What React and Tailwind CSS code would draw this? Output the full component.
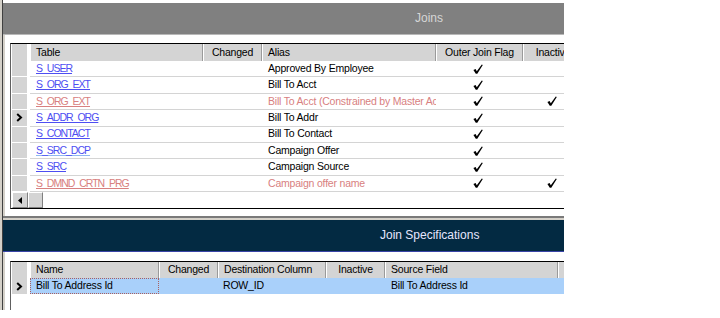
import React from "react";

const BLUE = "text-[#4e4ef2]";
const PINK = "text-[#d88080]";

function Check() {
  return (
    <svg width="10" height="10" viewBox="0 0 10 10">
      <path d="M0.4 6 L2.6 4.9 L3.8 7.2 L8.8 0.4 L9.8 0.9 L4.3 9.7 L2.8 9.7 Z" fill="#000" />
    </svg>
  );
}

function Chevron() {
  return (
    <svg width="7" height="9" viewBox="0 0 7 9">
      <path d="M1.2 1 L5 4.5 L1.2 8" stroke="#000" strokeWidth="2" fill="none" />
    </svg>
  );
}

const rows = [
  { t: "S_USER", tc: BLUE, a: "Approved By Employee", ac: "text-black", oj: true, ia: false },
  { t: "S_ORG_EXT", tc: BLUE, a: "Bill To Acct", ac: "text-black", oj: true, ia: false },
  { t: "S_ORG_EXT", tc: PINK, a: "Bill To Acct (Constrained by Master Account)", ac: PINK, oj: true, ia: true },
  { t: "S_ADDR_ORG", tc: BLUE, a: "Bill To Addr", ac: "text-black", oj: true, ia: false, sel: true },
  { t: "S_CONTACT", tc: BLUE, a: "Bill To Contact", ac: "text-black", oj: true, ia: false },
  { t: "S_SRC_DCP", tc: BLUE, a: "Campaign Offer", ac: "text-black", oj: true, ia: false, lite: true },
  { t: "S_SRC", tc: BLUE, a: "Campaign Source", ac: "text-black", oj: true, ia: false },
  { t: "S_DMND_CRTN_PRG", tc: PINK, a: "Campaign offer name", ac: PINK, oj: true, ia: true },
];

function HCell({ w, children, center }) {
  return (
    <div
      className={`${w} shrink-0 h-full bg-[#d4d4d4] border-l border-l-white border-r border-r-[#9a9a9a] flex items-center whitespace-nowrap overflow-hidden ${
        center ? "justify-center" : "pl-[5px]"
      }`}
    >
      {children}
    </div>
  );
}

function SelCell({ children, white }) {
  return (
    <div className="w-[19px] shrink-0 h-full pl-[1px] pr-[3px]">
      <div
        className={`w-full h-full bg-[#d4d4d4] flex items-center justify-center ${
          white ? "border-b border-b-white" : ""
        }`}
      >
        {children}
      </div>
    </div>
  );
}

export default function App() {
  return (
    <div
      className="w-[720px] h-[318px] bg-white overflow-hidden text-[10.5px] tracking-[-0.2px] text-black"
      style={{ fontFamily: '"Liberation Sans", Arial, sans-serif' }}
    >
      <div className="flex h-[310px] w-[564px]">
        <div className="w-[2px] shrink-0 bg-[#d4d0c8]" />
        <div className="w-[562px] shrink-0 border-l border-l-[#404040] flex flex-col overflow-hidden">
          <div className="h-[3px] shrink-0 bg-white" />
          {/* Joins header */}
          <div className="h-[31px] shrink-0 bg-[#808080] flex items-center pl-[412px] pb-[1px] text-[#d6d6d6] text-[12px] tracking-normal">
            Joins
          </div>
          <div className="h-[1px] shrink-0 bg-[#b8b8b8]" />
          {/* Joins panel */}
          <div className="h-[181px] shrink-0 bg-white border-l-2 border-l-[#d4d0c8] pl-[5px] pt-[8px]">
            <div className="w-[600px] border-t border-t-black border-l border-l-[#606060] border-b border-b-black">
              <div className="flex h-[17px]">
                <SelCell />
                <HCell w="w-[173px]">Table</HCell>
                <HCell w="w-[59px]" center>Changed</HCell>
                <HCell w="w-[174px]">Alias</HCell>
                <HCell w="w-[87px]" center>Outer Join Flag</HCell>
                <HCell w="w-[60px]" center>Inactive</HCell>
              </div>
              {rows.map((r, i) => (
                <div key={i} className="flex h-[16.4px]">
                  <SelCell white>{r.sel ? <Chevron /> : null}</SelCell>
                  <div className="flex h-full border-b border-b-[#d4d4d4] w-[580px]">
                    <div className="w-[173px] shrink-0 pl-[6px] flex items-center whitespace-nowrap overflow-hidden">
                      <span
                        className={`${r.tc} underline tracking-[-1px] ${
                          r.lite ? "decoration-[#8fb8f0]" : ""
                        }`}
                      >
                        {r.t}
                      </span>
                    </div>
                    <div className="w-[59px] shrink-0" />
                    <div className={`w-[174px] shrink-0 pl-[6px] flex items-center whitespace-nowrap overflow-hidden ${r.ac}`}>
                      {r.a}
                    </div>
                    <div className="w-[87px] shrink-0 flex items-center justify-center pr-[3px]">
                      {r.oj ? <Check /> : null}
                    </div>
                    <div className="w-[60px] shrink-0 flex items-center justify-center pr-[3px]">
                      {r.ia ? <Check /> : null}
                    </div>
                  </div>
                </div>
              ))}
              <div className="flex h-[16px] items-stretch">
                <div className="w-[16px] shrink-0 ml-[1px] bg-[#d4d4d4] border border-t-white border-l-white border-r-[#808080] border-b-[#808080] flex items-center justify-center">
                  <svg width="4" height="7" viewBox="0 0 4 7">
                    <path d="M4 0 L0 3.5 L4 7 Z" fill="#000" />
                  </svg>
                </div>
                <div className="w-[15px] shrink-0 bg-[#d4d4d4] border border-t-white border-l-white border-r-[#808080] border-b-[#808080]" />
                <div className="flex-1 bg-white" />
              </div>
            </div>
          </div>
          <div className="h-[2px] shrink-0 bg-[#7a7a7a]" />
          <div className="h-[2px] shrink-0 bg-[#d4d0c8]" />
          {/* Join Specifications header */}
          <div className="h-[31px] shrink-0 bg-[#032a42] flex items-center pl-[377px] pb-[1px] text-[#e6e6ff] text-[12px] tracking-normal">
            Join Specifications
          </div>
          <div className="h-[1px] shrink-0 bg-[#3a44a8]" />
          {/* bottom panel */}
          <div className="flex-1 bg-white border-l-2 border-l-[#d4d0c8] pl-[5px] pt-[9px]">
            <div className="w-[600px] h-full border-t border-t-black border-l border-l-[#606060]">
              <div className="flex h-[16px]">
                <SelCell />
                <HCell w="w-[129px]">Name</HCell>
                <HCell w="w-[59px]" center>Changed</HCell>
                <HCell w="w-[108px]">Destination Column</HCell>
                <HCell w="w-[59px]" center>Inactive</HCell>
                <HCell w="w-[173px]">Source Field</HCell>
                <HCell w="w-[40px]"></HCell>
              </div>
              <div className="flex h-[16px]">
                <SelCell>
                  <Chevron />
                </SelCell>
                <div className="flex h-full bg-[#a9d0fa] w-[580px]">
                  <div className="w-[129px] shrink-0 pl-[5px] flex items-center whitespace-nowrap border border-dotted border-[#a86060]">
                    Bill To Address Id
                  </div>
                  <div className="w-[59px] shrink-0" />
                  <div className="w-[108px] shrink-0 pl-[5px] flex items-center whitespace-nowrap">ROW_ID</div>
                  <div className="w-[59px] shrink-0" />
                  <div className="w-[173px] shrink-0 pl-[6px] flex items-center whitespace-nowrap">Bill To Address Id</div>
                </div>
              </div>
            </div>
          </div>
        </div>
      </div>
    </div>
  );
}
